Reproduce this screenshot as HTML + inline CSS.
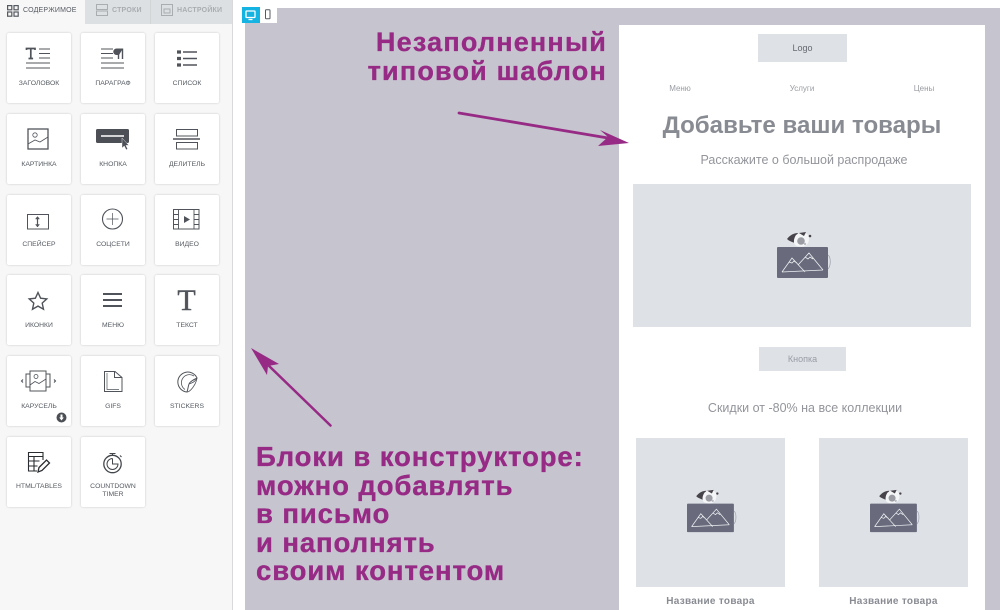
<!DOCTYPE html>
<html lang="ru"><head><meta charset="utf-8"><title>Конструктор</title>
<style>
*{box-sizing:border-box}
html,body{margin:0;padding:0}
body{width:1000px;height:610px;overflow:hidden;position:relative;background:#fff;font-family:"Liberation Sans","Noto Sans CJK SC",sans-serif}
.a{position:absolute}
.card{position:absolute;width:64px;height:70px;background:#fff;border-radius:2px;box-shadow:0 0 2px rgba(0,0,0,.2)}
.card span{position:absolute;left:-4px;right:-4px;top:47px;text-align:center;font-size:6.800px;line-height:8px;color:#555a60}
.card svg{position:absolute;left:0;top:0;overflow:visible}
.c1 svg,.c3 svg{left:-1px}
.r3 svg{top:-1px}
.r3 span,.r6 span{top:46px}
.t{position:absolute;white-space:nowrap;text-align:center}
.p{color:#962a85;font-weight:bold;font-size:27.500px;white-space:nowrap;position:absolute;letter-spacing:.9px;-webkit-text-stroke:.35px #962a85}
.img{position:absolute;background:#dee1e6}
</style></head><body>
<div class="a" style="left:0;top:0;width:233px;height:610px;background:#f7f7f7;border-right:1px solid #d9d9db"></div>
<div class="a" style="left:85px;top:0;width:147px;height:24px;background:#dde0e2"></div>
<div class="a" style="left:150px;top:0;width:1px;height:24px;background:#d2d5d6"></div>
<svg class="a" style="left:7px;top:5px" width="12" height="12" fill="none" stroke="#555a60" stroke-width="1.200"><rect x=".6" y=".6" width="4.200" height="4.200"/><rect x="7" y=".6" width="4.200" height="4.200"/><rect x=".6" y="7" width="4.200" height="4.200"/><rect x="7" y="7" width="4.200" height="4.200"/></svg>
<div class="t" style="left:23px;top:6px;font-size:7px;line-height:9px;color:#555a60;letter-spacing:.2px">СОДЕРЖИМОЕ</div>
<svg class="a" style="left:96px;top:4px" width="12" height="12" fill="none" stroke="#a9adb0"><rect x=".5" y=".5" width="11" height="5"/><rect x=".5" y="7" width="11" height="4.500"/></svg>
<div class="t" style="left:112px;top:6px;font-size:7px;line-height:9px;color:#a9adb0;letter-spacing:.2px;font-weight:bold">СТРОКИ</div>
<svg class="a" style="left:161px;top:4px" width="12" height="12" fill="none" stroke="#a9adb0"><rect x=".5" y=".5" width="11" height="11"/><path d="M3 5h6v4H3z"/></svg>
<div class="t" style="left:177px;top:6px;font-size:7px;line-height:9px;color:#a9adb0;letter-spacing:.2px;font-weight:bold">НАСТРОЙКИ</div>

<div class="card c1" style="left:7px;top:33px"><span>ЗАГОЛОВОК</span><svg width="65" height="40" fill="none" stroke="#50545a"><path d="M20.500 17v-1.500h8.500V17M24.800 15.500v10M22.500 25.500h4.600" stroke-width="1.700"/><path d="M33 16h11M33 20.500h11M33 25h11" stroke-width="1"/><path d="M20 30h24M20 35h24" stroke-width="1.100"/></svg></div>
<div class="card" style="left:81px;top:33px"><span>ПАРАГРАФ</span><svg width="65" height="40" fill="none" stroke="#50545a"><path d="M20 16h12M20 20.500h12M20 25h12M20 30h23M20 35h23" stroke-width="1"/><path d="M37.500 15.500V26M41.500 15.500V26" stroke-width="1.400"/><path d="M42 15.500h-6.500a3 3 0 0 0 0 6.500h2.500z" fill="#50545a" stroke="none"/></svg></div>
<div class="card c3" style="left:155px;top:33px"><span>СПИСОК</span><svg width="65" height="40" fill="none" stroke="#50545a"><path d="M29 19h14M29 25.500h14M29 32h14" stroke-width="1.400"/><path d="M23 19h4M23 25.500h4M23 32h4" stroke-width="3.200"/></svg></div>

<div class="card c1" style="left:7px;top:114px"><span>КАРТИНКА</span><svg width="65" height="40" fill="none" stroke="#50545a" stroke-width="1.300"><rect x="22" y="15" width="20" height="20"/><circle cx="29" cy="21" r="2.200" stroke-width=".8"/><path d="M22 30l7-4 5 2 8-5" stroke-width=".8"/></svg></div>
<div class="card" style="left:81px;top:114px"><span>КНОПКА</span><svg width="65" height="40"><rect x="15" y="15" width="33" height="14" rx="1.500" fill="#4c5056"/><path d="M20 22h23" stroke="#fff" stroke-width="1.500"/><path d="M41 24v10l2.300-2 1.800 3.800 1.600-.8-1.800-3.600h3z" fill="#4c5056" stroke="#fff" stroke-width=".4"/></svg></div>
<div class="card c3" style="left:155px;top:114px"><span>ДЕЛИТЕЛЬ</span><svg width="65" height="40" fill="none" stroke="#50545a"><rect x="22.500" y="15.500" width="21" height="6.500"/><rect x="22.500" y="28.500" width="21" height="6.500"/><path d="M19 25h27" stroke-width="1.500"/></svg></div>

<div class="card c1 r3" style="left:7px;top:195px"><span>СПЕЙСЕР</span><svg width="65" height="40" fill="none" stroke="#50545a"><rect x="21.500" y="20.500" width="21" height="14.500" stroke-width="1"/><path d="M31.500 23v9.500" stroke-width="1.200"/><path d="M29.500 25l2-2.500 2 2.500zM29.500 30.500l2 2.500 2-2.500z" fill="#50545a" stroke-width=".5"/></svg></div>
<div class="card r3" style="left:81px;top:195px"><span>СОЦСЕТИ</span><svg width="65" height="40" fill="none" stroke="#50545a"><circle cx="31.500" cy="25" r="10" stroke-width="1.100"/><path d="M31.500 19v12M25.500 25h12" stroke-width=".7"/></svg></div>
<div class="card c3 r3" style="left:155px;top:195px"><span>ВИДЕО</span><svg width="65" height="40" fill="none" stroke="#50545a"><rect x="19.500" y="15.500" width="25.500" height="19.500" stroke-width="1"/><path d="M24.500 15.500V35M40 15.500V35M19.500 20.500h5M19.500 25.500h5M19.500 30.500h5M40 20.500h5M40 25.500h5M40 30.500h5" stroke-width=".9"/><path d="M30 22l6 3.500-6 3.500z" fill="#50545a" stroke="none"/></svg></div>

<div class="card c1" style="left:7px;top:275px"><span>ИКОНКИ</span><svg width="65" height="40" fill="none" stroke="#50545a"><path d="M32 17.500l2.600 5.700 6.200.7-4.600 4.200 1.300 6.100-5.500-3.100-5.500 3.100 1.300-6.100-4.600-4.200 6.200-.7z" stroke-width="1.400"/></svg></div>
<div class="card" style="left:81px;top:275px"><span>МЕНЮ</span><svg width="65" height="40" fill="none" stroke="#50545a" stroke-width="2"><path d="M22 19h19M22 25h19M22 31h19"/></svg></div>
<div class="card c3" style="left:155px;top:275px"><span>ТЕКСТ</span><svg width="65" height="40"><text x="32.500" y="35" text-anchor="middle" font-family="Liberation Serif" font-size="30" fill="#50545a" stroke="#50545a" stroke-width=".4">T</text></svg></div>

<div class="card c1" style="left:7px;top:356px"><span>КАРУСЕЛЬ</span><svg width="65" height="40" fill="none" stroke="#50545a" stroke-width="1"><rect x="24" y="15" width="16" height="20"/><path d="M24 18h-4v13h4M40 18h4v13h-4"/><circle cx="30" cy="20.500" r="2" stroke-width=".8"/><path d="M24 29l5-3.500 4 2 7-4.500" stroke-width=".8"/><path d="M17 23.500l-1.500 1.500 1.500 1.500M48 23.500l1.500 1.500-1.500 1.500" stroke-width="1.100"/></svg><svg style="left:49px;top:56px" width="11" height="11"><circle cx="5.500" cy="5.500" r="5" fill="#4c5055"/><path d="M4.500 2.500h2v3h1.300L5.500 8.500 3.200 5.500h1.300z" fill="#fff" stroke="none"/></svg></div>
<div class="card" style="left:81px;top:356px"><span>GIFS</span><svg width="65" height="40" fill="none" stroke="#50545a" stroke-width="1"><path d="M23.500 15.500h10.500l7 6V35.500H23.500zM33.500 15.500v6h7.500"/><path d="M26 17v16.500h12" stroke-width=".7"/></svg></div>
<div class="card c3" style="left:155px;top:356px"><span>STICKERS</span><svg width="65" height="40" fill="none" stroke="#50545a" stroke-width="1"><path d="M33 36A10 10 0 1 1 43 22c-1.500 1-7 3-8 6-1 3-1 5-2 8z"/><path d="M33 36c3 0 9-7 10-14M31 33.500A8 8 0 1 1 40 20" stroke-width=".8"/><path d="M35 28c3-1 6-2 8-6" stroke-width=".8"/></svg></div>

<div class="card c1 r6" style="left:7px;top:437px"><span>HTML/TABLES</span><svg width="65" height="40" fill="none" stroke="#2a2d30" stroke-width="1.100"><path d="M37 23V15.500H22.500V34H31"/><path d="M22.500 19.500H37M22.500 24h11M22.500 29h9M28 19.500V34"/><path d="M32 35l1-4.500 7.500-7.500 3 3-7.500 7.500z" stroke-width="1.300"/></svg></div>
<div class="card r6" style="left:81px;top:437px"><span>COUNTDOWN<br>TIMER</span><svg width="65" height="40" fill="none" stroke="#43474b"><circle cx="31.500" cy="27" r="8.700" stroke-width="1.300"/><path d="M28.500 16.500h6M31.500 16.500v2M39 18.500l1.500 1.500" stroke-width="1.100"/><path d="M31.500 21.500V27h5.500A5.500 5.500 0 1 1 31.500 21.500" stroke-width="1"/></svg></div>

<div class="a" style="left:233px;top:0;width:767px;height:610px;background:#fff"></div>
<div class="a" style="left:245px;top:8px;width:755px;height:602px;background:#c6c4cf"></div>
<div class="a" style="left:619px;top:25px;width:366px;height:585px;background:#fff"></div>
<div class="a" style="left:242px;top:7px;width:18px;height:16px;background:#15b3e2"></div>
<div class="a" style="left:260px;top:7px;width:17px;height:16px;background:#fff"></div>
<svg class="a" style="left:245px;top:10px" width="12" height="11" fill="none" stroke="#fff" stroke-width="1.300"><rect x="1" y="1" width="9" height="6.500" rx=".5"/><path d="M3.500 9.500h4"/></svg>
<svg class="a" style="left:264px;top:9px" width="8" height="12" fill="none" stroke="#555a60" stroke-width="1"><rect x="1.500" y=".8" width="4.500" height="9" rx=".7"/></svg>

<div class="img" style="left:758px;top:34px;width:89px;height:28px"></div>
<div class="t" style="left:758px;top:34px;width:89px;line-height:28px;font-size:9px;color:#666a71">Logo</div>
<div class="t" style="left:660px;width:40px;top:84px;font-size:8px;line-height:10px;color:#9a9ca2">Меню</div>
<div class="t" style="left:782px;width:40px;top:84px;font-size:8px;line-height:10px;color:#9a9ca2">Услуги</div>
<div class="t" style="left:904px;width:40px;top:84px;font-size:8px;line-height:10px;color:#9a9ca2">Цены</div>
<div class="t" style="left:619px;width:366px;top:110px;font-size:24.100px;line-height:32px;font-weight:bold;color:#898b93">Добавьте ваши товары</div>
<div class="t" style="left:619px;width:370px;top:152px;font-size:12.500px;line-height:16px;color:#93959b">Расскажите о большой распродаже</div>
<div class="img" style="left:633px;top:184px;width:338px;height:143px"></div>

<svg width="0" height="0" style="position:absolute"><defs><g id="ph">
<rect x="0" y="17" width="51" height="31" rx="1" fill="#696b7d"/>
<path d="M51 25c3 2 3 11 0 14" fill="none" stroke="#9a9ca8" stroke-width=".7"/>
<path d="M5 42L15 28l13 14M21 35l11-12 14 17M5 42l41-2M12 32l3 1 2-2 3 2M28 27l3 2 2-2 3 2" fill="none" stroke="#eef0f3" stroke-width=".8"/>
<path d="M10 9c3-4 7-6 11-6-2 3-3 7-3 10-3-1-6-2-8-4z" fill="#47434a"/>
<path d="M19 5c4-3 10-3 12 0s1 9-3 11c-3 1-8 1-10-1-2-3-1-7 1-10z" fill="#f4f5f6"/>
<circle cx="24" cy="11" r="3.800" fill="#9b9ca3"/>
<path d="M22 3l7-1-2 4z" fill="#47434a"/><circle cx="33" cy="6" r="1.300" fill="#47434a"/><circle cx="28" cy="14" r="1.200" fill="#b9bbc1"/>
</g></defs></svg>
<svg class="a" style="left:777px;top:230px" width="56" height="50" viewBox="0 0 56 50"><use href="#ph"/></svg>

<div class="img" style="left:759px;top:347px;width:87px;height:24px"></div>
<div class="t" style="left:759px;top:347px;width:87px;line-height:24px;font-size:9px;color:#9a9ca4">Кнопка</div>
<div class="t" style="left:620px;width:370px;top:400px;font-size:12.500px;line-height:16px;color:#93959b">Скидки от -80% на все коллекции</div>

<div class="img" style="left:636px;top:438px;width:149px;height:149px"></div>
<div class="img" style="left:819px;top:438px;width:149px;height:149px"></div>
<svg class="a" style="left:687px;top:488.400px" width="51.500" height="46" viewBox="0 0 56 50"><use href="#ph"/></svg>
<svg class="a" style="left:870px;top:488.400px" width="51.500" height="46" viewBox="0 0 56 50"><use href="#ph"/></svg>
<div class="t" style="left:636px;width:149px;top:595px;font-size:10px;line-height:13px;font-weight:bold;color:#898b93;letter-spacing:.3px">Название товара</div>
<div class="t" style="left:819px;width:149px;top:595px;font-size:10px;line-height:13px;font-weight:bold;color:#898b93;letter-spacing:.3px">Название товара</div>

<div class="p" style="right:393px;top:26px;line-height:32px;font-size:27px;letter-spacing:1.200px">Незаполненный</div>
<div class="p" style="right:393px;top:55px;line-height:32px;font-size:27px;letter-spacing:1.200px">типовой шаблон</div>
<div class="p" style="left:256px;top:442px;line-height:29px">Блоки в конструкторе:</div>
<div class="p" style="left:256px;top:470.500px;line-height:29px">можно добавлять</div>
<div class="p" style="left:256px;top:499px;line-height:29px">в письмо</div>
<div class="p" style="left:256px;top:527.500px;line-height:29px">и наполнять</div>
<div class="p" style="left:256px;top:556px;line-height:29px">своим контентом</div>

<svg class="a" style="left:0;top:0" width="1000" height="610">
<path d="M459 113L608 138" stroke="#962a85" stroke-width="2.800" stroke-linecap="round"/>
<path d="M629 143L598 146 608 137 600 130z" fill="#962a85"/>
<path d="M330.500 425.500L266 363" stroke="#962a85" stroke-width="2.500" stroke-linecap="round"/>
<path d="M251 348L279 364 268 366 267 375z" fill="#962a85"/>
</svg>
</body></html>
